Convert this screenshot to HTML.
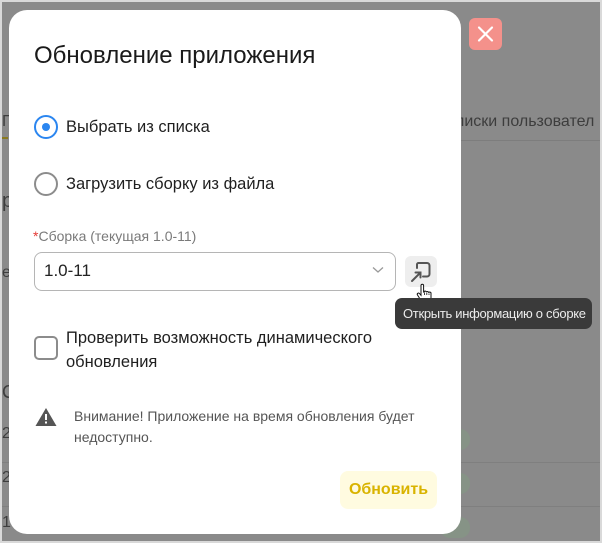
<!DOCTYPE html>
<html><head><meta charset="utf-8"><style>
*{margin:0;padding:0;box-sizing:border-box}
body{width:602px;height:543px;overflow:hidden;position:relative;background:#8a8a8a;font-family:"Liberation Sans","DejaVu Sans",sans-serif;}
.a{position:absolute;white-space:nowrap}
.bg{color:#3d3d3d;font-size:16px}
</style></head><body>
<div class="a" style="left:0;top:0;width:602px;height:543px;border:2px solid #d9d9d9;z-index:10;pointer-events:none"></div>
<div class="a bg" style="left:2px;top:113px">Г</div>
<div class="a" style="left:0;top:137px;width:8px;height:2px;background:#8a7a20"></div>
<div class="a bg" style="left:455px;top:113px">лиски пользовател</div>
<div class="a" style="left:461px;top:140px;width:141px;height:1px;background:#7d7d7d"></div>
<div class="a bg" style="left:2px;top:190px;font-size:20px">р</div>
<div class="a bg" style="left:2px;top:264px">е</div>
<div class="a bg" style="left:2px;top:382px;font-size:18px">С</div>
<div class="a bg" style="left:2px;top:425px">2</div>
<div class="a bg" style="left:2px;top:469px">2</div>
<div class="a bg" style="left:2px;top:514px">1</div>
<div class="a" style="left:0;top:462px;width:602px;height:1px;background:#7f7f7f"></div>
<div class="a" style="left:0;top:506px;width:602px;height:1px;background:#7f7f7f"></div>
<div class="a" style="left:440px;top:429px;width:30px;height:21px;border-radius:10px;background:#869386"></div>
<div class="a" style="left:440px;top:473px;width:30px;height:21px;border-radius:10px;background:#869386"></div>
<div class="a" style="left:440px;top:517px;width:30px;height:21px;border-radius:10px;background:#869386"></div>
<div class="a" style="left:469px;top:18px;width:33px;height:32px;border-radius:6px;background:#f4918b">
<svg width="33" height="32"><path d="M10 9.5L23 22.5M23 9.5L10 22.5" stroke="#fff" stroke-width="2.2" stroke-linecap="round"/></svg></div>
<div class="a" style="left:9px;top:10px;width:452px;height:524px;background:#fff;border-radius:18px"></div>
<div class="a" style="left:34px;top:42px;font-size:24px;color:#1a1a1a">Обновление приложения</div>
<div class="a" style="left:34px;top:115px;width:24px;height:24px;border-radius:50%;border:2px solid #2b86f0"><div style="position:absolute;left:6px;top:6px;width:8px;height:8px;border-radius:50%;background:#2b86f0"></div></div>
<div class="a" style="left:66px;top:118px;font-size:16.5px;color:#1f1f1f">Выбрать из списка</div>
<div class="a" style="left:34px;top:172px;width:24px;height:24px;border-radius:50%;border:2px solid #8c8c8c"></div>
<div class="a" style="left:66px;top:175px;font-size:16.5px;color:#1f1f1f">Загрузить сборку из файла</div>
<div class="a" style="left:33px;top:228px;font-size:14px;color:#7a7a7a"><span style="color:#e53935">*</span>Сборка (текущая 1.0-11)</div>
<div class="a" style="left:34px;top:252px;width:362px;height:39px;border:1px solid #b5b5b5;border-radius:8px"></div>
<div class="a" style="left:44px;top:261px;font-size:17px;color:#222">1.0-11</div>
<svg class="a" style="left:372px;top:266px" width="12" height="8"><path d="M1 1.5L6 6L11 1.5" stroke="#999" stroke-width="1.3" fill="none"/></svg>
<div class="a" style="left:405px;top:256px;width:32px;height:31px;border-radius:6px;background:#eeeeee">
<svg width="32" height="31"><path d="M12 12V8.5a1.5 1.5 0 0 1 1.5-1.5H22a2.5 2.5 0 0 1 2.5 2.5V18a2.5 2.5 0 0 1-2.5 2.5H18" stroke="#555" stroke-width="2" fill="none" stroke-linecap="round"/><path d="M7 25L15 17M10.5 16.5H15.5V21.5" stroke="#555" stroke-width="2" fill="none" stroke-linecap="round"/></svg></div>
<svg class="a" style="left:414px;top:282px" width="20" height="24"><path d="M7 3.5a1.3 1.3 0 0 1 2.6 0V10l.5-.2a1.2 1.2 0 0 1 2.3.5 1.2 1.2 0 0 1 2.3.5 1.2 1.2 0 0 1 2.3.6V16c0 3-1.8 5-4.5 5H11c-2 0-3-1-4-2.5L3.5 13a1.2 1.2 0 0 1 2-1.4L7 13.3Z" fill="#fff" stroke="#111" stroke-width="1"/><path d="M10.5 13V10.5M12.8 13V11M15 13V11.5" stroke="#111" stroke-width=".8"/></svg>
<div class="a" style="left:395px;top:298px;width:197px;height:31px;border-radius:7px;background:#3a3a3a;color:#ececec;font-size:13px;letter-spacing:-0.3px;line-height:31px;padding-left:8px">Открыть информацию о сборке</div>
<div class="a" style="left:34px;top:336px;width:24px;height:24px;border-radius:5px;border:2px solid #8c8c8c"></div>
<div class="a" style="left:66px;top:326px;font-size:16.5px;color:#1f1f1f;line-height:24px">Проверить возможность динамического<br>обновления</div>
<svg class="a" style="left:35px;top:407px" width="22" height="20"><path d="M11 1L21.5 19H0.5Z" fill="#555"/><rect x="10" y="7" width="2" height="6" fill="#fff"/><rect x="10" y="14.5" width="2" height="2" fill="#fff"/></svg>
<div class="a" style="left:74px;top:406px;font-size:14px;color:#555;line-height:21px">Внимание! Приложение на время обновления будет<br>недоступно.</div>
<div class="a" style="left:340px;top:471px;width:97px;height:38px;border-radius:8px;background:#fffbe0;color:#d9b300;font-size:16px;font-weight:bold;text-align:center;line-height:38px">Обновить</div>
</body></html>
